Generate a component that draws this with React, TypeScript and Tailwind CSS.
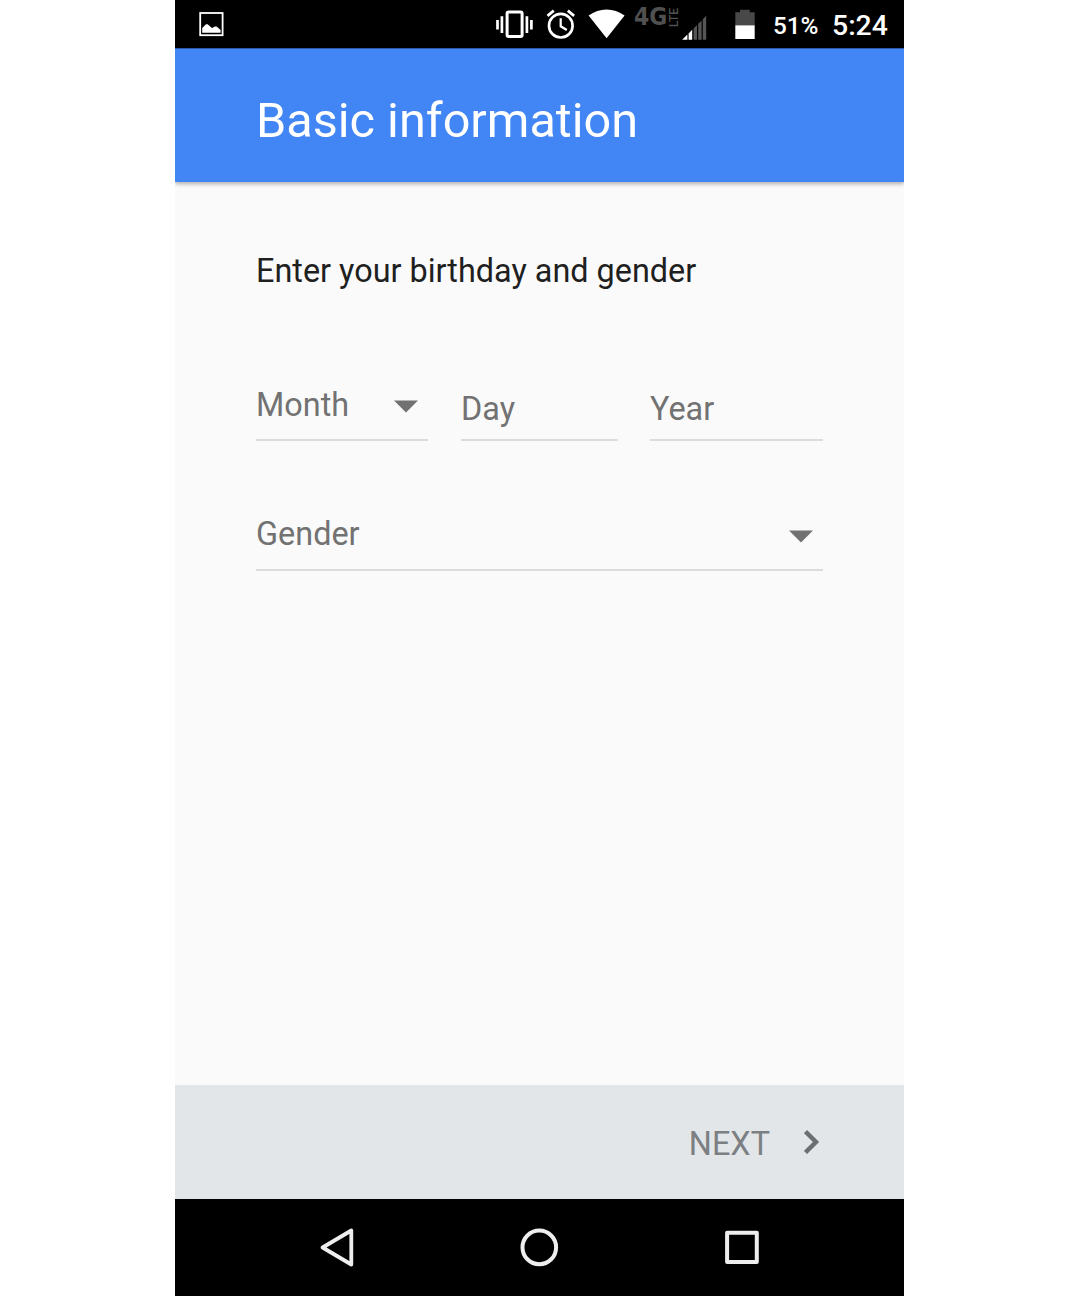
import React from "react";

function StatusBar() {
  return (
    <div className="flex h-12 items-start bg-black pl-6 text-white">
      <svg className="h-12 w-[25px] shrink-0" viewBox="199 0 25 48">
        <rect x="200.2" y="13" width="22.4" height="22.2" fill="none" stroke="#fff" strokeWidth="1.8" />
        <path d="M202.2 32.7V28L206 24.3H207.6L212 28L215 26.6H216.6L220.6 30V32.7Z" fill="#fff" />
      </svg>
      <svg className="ml-[271px] h-12 w-[39px] shrink-0" viewBox="495 0 39 48">
        <rect x="507.1" y="12" width="15" height="24.6" rx="1.5" fill="none" stroke="#fff" strokeWidth="3" />
        <path d="M497.5 20v9.5M501.9 16.3v16.7M526.9 16.3v16.7M531.4 20v9.5" stroke="#fff" strokeWidth="2.7" />
      </svg>
      <svg className="ml-3 h-12 w-[31px] shrink-0" viewBox="546 0 31 48" fill="none" stroke="#fff">
        <circle cx="560.8" cy="25.7" r="11.8" strokeWidth="2.7" />
        <path d="M560.7 18.3V26.3L566.8 30" strokeWidth="2.2" />
        <path d="M547.5 15.8L553.8 10.7M567.8 10.7L574.1 15.8" strokeWidth="2.8" />
      </svg>
      <svg className="ml-[11px] h-12 w-[37px] shrink-0" viewBox="588 0 37 48">
        <path d="M588.6 15.6Q597 9.6 606.6 9.6T624.6 15.6L606.6 38.2Z" fill="#fff" />
      </svg>
      <div className="ml-[9px] flex h-12 w-[48px] shrink-0 pt-[7px] text-[#505050]">
        <span className="w-[35px] shrink-0 origin-top-left scale-x-[0.88] font-['DejaVu_Sans'] text-[25px] font-bold leading-[19px]">4G</span>
        <span className="h-[20px] w-[10px] shrink-0 rotate-180 whitespace-nowrap font-['Roboto'] text-[12px] font-medium leading-[10px] [writing-mode:vertical-rl]">LTE</span>
      </div>
      <svg className="h-12 w-[26px] shrink-0" viewBox="682 0 26 48">
        <path d="M682.2 39.8L687.4 34.6V39.8ZM688.6 33.4L692.2 29.8V39.8H688.6Z" fill="#fff" />
        <path d="M693.6 28.4L697 25V39.8H693.6ZM698.2 23.8L701.6 20.4V39.8H698.2ZM702.8 19.2L706.2 15.8V39.8H702.8Z" fill="#555" />
      </svg>
      <svg className="ml-[27px] h-12 w-[20px] shrink-0" viewBox="735 0 20 48">
        <path d="M735.3 12.3H740V9.7H749.7V12.3H754.7V25.3H735.3Z" fill="#484848" />
        <path d="M735.3 25.3H754.7V39H735.3Z" fill="#fff" />
      </svg>
      <span className="ml-[18px] w-[59px] shrink-0 font-['Roboto'] text-[24.3px] font-medium leading-[51px]">51%</span>
      <span className="shrink-0 font-['Roboto'] text-[28.4px] font-medium leading-[51px]">5:24</span>
    </div>
  );
}

function DownArrow() {
  return (
    <svg className="h-[13px] w-6 shrink-0" viewBox="0 0 24 13">
      <path d="M0 0.4H24L12 12.6Z" fill="#717171" />
    </svg>
  );
}

export default function App() {
  return (
    <div className="h-[1296px] w-[1080px] overflow-hidden bg-white pl-[175px] font-['Roboto',sans-serif]">
      <div className="flex h-full w-[729px] flex-col overflow-hidden bg-[#fafafa]">
        <StatusBar />
        <header className="z-10 flex h-[134px] items-center border-t border-[#2c5aa8] bg-[#4285f4] pl-[81px] pt-[11px] shadow-[0_2px_4px_rgba(0,0,0,0.3)]">
          <h1 className="text-[48.6px] leading-[56px] text-white">Basic information</h1>
        </header>
        <main className="flex-1 px-[81px] pt-[70px]">
          <p className="text-[32.4px] leading-[38px] text-[#1f1f1f]">Enter your birthday and gender</p>
          <div className="mt-[89px] flex h-[62px] text-[32.4px] leading-[38px] text-[#727272]">
            <div className="flex w-[172px] justify-between border-b-2 border-[#dcdcdc] pr-[10px] pt-[7px]">
              <span>Month</span>
              <div className="pt-[14px]"><DownArrow /></div>
            </div>
            <div className="ml-[33px] w-[157px] border-b-2 border-[#dcdcdc] pt-[11px]">Day</div>
            <div className="ml-8 w-[173px] border-b-2 border-[#dcdcdc] pt-[11px]">Year</div>
          </div>
          <div className="mt-[68px] flex h-[62px] w-[567px] justify-between border-b-2 border-[#dcdcdc] pr-[10px] pt-[6px] text-[32.4px] leading-[38px] text-[#727272]">
            <span>Gender</span>
            <div className="pt-[15px]"><DownArrow /></div>
          </div>
        </main>
        <footer className="flex h-[114px] items-center justify-end bg-[#e2e6e9] pr-[84px]">
          <span className="pt-[4px] text-[32.4px] leading-[38px] text-[#7d8082]">NEXT</span>
          <svg className="ml-[34px] h-6 w-4" viewBox="0 0 16 24">
            <path d="M1.5 1.6L12 12L1.5 22.4" fill="none" stroke="#6c6f71" strokeWidth="4.4" />
          </svg>
        </footer>
        <nav className="flex h-[97px] items-center bg-black pl-[144px] text-[#eee]">
          <svg className="h-10 w-9" viewBox="0 0 36 40" fill="none" stroke="currentColor" strokeWidth="3.8" strokeLinejoin="round">
            <path d="M3.6 19.5L32.3 2.5V36.5Z" />
          </svg>
          <svg className="ml-[164px] h-10 w-10" viewBox="0 0 40 40" fill="none" stroke="currentColor" strokeWidth="4">
            <circle cx="20.3" cy="19.4" r="16.8" />
          </svg>
          <svg className="ml-[163px] h-10 w-10" viewBox="0 0 40 40" fill="none" stroke="currentColor" strokeWidth="4" strokeLinejoin="round">
            <path d="M5.1 4.8H34.8V34H5.1Z" />
          </svg>
        </nav>
      </div>
    </div>
  );
}
